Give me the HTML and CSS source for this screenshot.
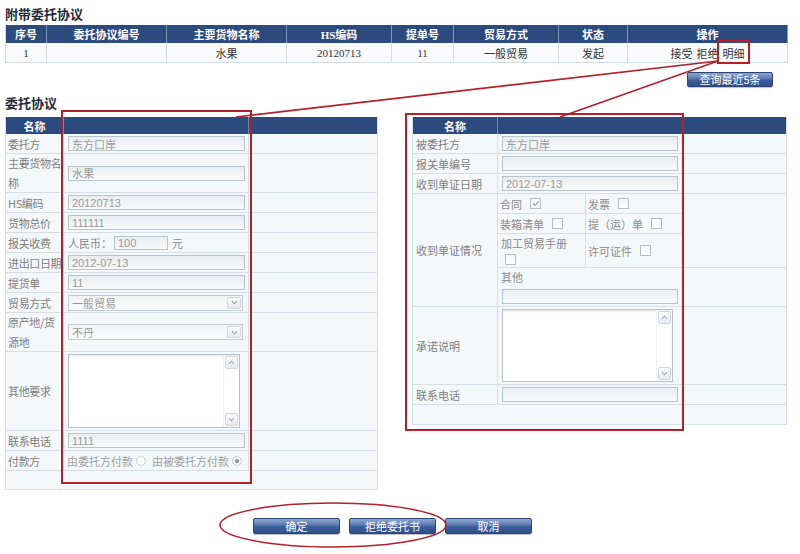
FILE: index.html
```html
<!DOCTYPE html>
<html lang="zh-CN">
<head>
<meta charset="utf-8">
<title>委托协议</title>
<link rel="stylesheet" href="styles.css">
</head>
<body>
<div class="page">
  <h2 class="sec-title t1">附带委托协议</h2>
  <div class="list">
    <div class="th">序号</div>
    <div class="th">委托协议编号</div>
    <div class="th">主要货物名称</div>
    <div class="th">HS编码</div>
    <div class="th">提单号</div>
    <div class="th">贸易方式</div>
    <div class="th">状态</div>
    <div class="th">操作</div>
    <div class="td">1</div>
    <div class="td"></div>
    <div class="td">水果</div>
    <div class="td">20120713</div>
    <div class="td">11</div>
    <div class="td">一般贸易</div>
    <div class="td">发起</div>
    <div class="td ops"><a>接受</a><a>拒绝</a><a>明细</a></div>
  </div>
  <div class="query-row"><button class="btn btn-query">查询最近5条</button></div>

  <h2 class="sec-title t2">委托协议</h2>
  <div class="panels">
    <div class="form form-left">
      <div class="h">名称</div><div class="h"></div><div class="h"></div>

      <div class="c lbl">委托方</div>
      <div class="c val"><input class="inp" value="东方口岸" readonly></div><div class="c f"></div>

      <div class="c lbl">主要货物名<br>称</div>
      <div class="c val"><input class="inp" value="水果" readonly></div><div class="c f"></div>

      <div class="c lbl">HS编码</div>
      <div class="c val"><input class="inp" value="20120713" readonly></div><div class="c f"></div>

      <div class="c lbl">货物总价</div>
      <div class="c val"><input class="inp" value="111111" readonly></div><div class="c f"></div>

      <div class="c lbl">报关收费</div>
      <div class="c val fee"><span>人民币：</span><input class="inp inp-s" value="100" readonly><span>元</span></div><div class="c f"></div>

      <div class="c lbl">进出口日期</div>
      <div class="c val"><input class="inp" value="2012-07-13" readonly></div><div class="c f"></div>

      <div class="c lbl">提货单</div>
      <div class="c val"><input class="inp" value="11" readonly></div><div class="c f"></div>

      <div class="c lbl">贸易方式</div>
      <div class="c val"><div class="sel"><span>一般贸易</span><span class="arr"><svg width="7" height="5" viewBox="0 0 8 5"><path d="M1 1 L4 4 L7 1" fill="none" stroke="#9aa3ab" stroke-width="1.2"/></svg></span></div></div><div class="c f"></div>

      <div class="c lbl">原产地/货<br>源地</div>
      <div class="c val"><div class="sel"><span>不丹</span><span class="arr"><svg width="7" height="5" viewBox="0 0 8 5"><path d="M1 1 L4 4 L7 1" fill="none" stroke="#9aa3ab" stroke-width="1.2"/></svg></span></div></div><div class="c f"></div>

      <div class="c lbl">其他要求</div>
      <div class="c val"><div class="ta ta-l"><div class="ta-body"></div><div class="sb"><span class="sbtn"><svg width="7" height="5" viewBox="0 0 8 5"><path d="M1 4 L4 1 L7 4" fill="none" stroke="#9aa3ab" stroke-width="1.2"/></svg></span><span class="sbtn"><svg width="7" height="5" viewBox="0 0 8 5"><path d="M1 1 L4 4 L7 1" fill="none" stroke="#9aa3ab" stroke-width="1.2"/></svg></span></div></div></div><div class="c f"></div>

      <div class="c lbl">联系电话</div>
      <div class="c val"><input class="inp" value="1111" readonly></div><div class="c f"></div>

      <div class="c lbl">付款方</div>
      <div class="c val pay"><span>由委托方付款</span><span class="rd"></span><span>由被委托方付款</span><span class="rd on"></span></div><div class="c f"></div>

      <div class="c span"></div>
    </div>

    <div class="form form-right">
      <div class="h">名称</div><div class="h"></div><div class="h"></div>

      <div class="c lbl">被委托方</div>
      <div class="c val"><input class="inp inp-r" value="东方口岸" readonly></div><div class="c f"></div>

      <div class="c lbl">报关单编号</div>
      <div class="c val"><input class="inp inp-r" value="" readonly></div><div class="c f"></div>

      <div class="c lbl">收到单证日期</div>
      <div class="c val"><input class="inp inp-r" value="2012-07-13" readonly></div><div class="c f"></div>

      <div class="c lbl rs2">收到单证情况</div>
      <div class="c val-checks">
        <div class="checks">
          <div class="ck">合同<span class="cb on"><svg width="8" height="7" viewBox="0 0 8 7"><path d="M1 3.5 L3 5.5 L7 1" fill="none" stroke="#8b949c" stroke-width="1.1"/></svg></span></div>
          <div class="ck">发票<span class="cb"></span></div>
          <div class="ck">装箱清单<span class="cb"></span></div>
          <div class="ck">提（运）单<span class="cb"></span></div>
          <div class="ck ck-col">加工贸易手册<span class="cb"></span></div>
          <div class="ck">许可证件<span class="cb"></span></div>
        </div>
      </div>
      <div class="c f"></div>

      <div class="c val other"><span class="other-t">其他</span><input class="inp inp-r" value="" readonly></div><div class="c f"></div>

      <div class="c lbl">承诺说明</div>
      <div class="c val"><div class="ta ta-r"><div class="ta-body"></div><div class="sb"><span class="sbtn"><svg width="7" height="5" viewBox="0 0 8 5"><path d="M1 4 L4 1 L7 4" fill="none" stroke="#9aa3ab" stroke-width="1.2"/></svg></span><span class="sbtn"><svg width="7" height="5" viewBox="0 0 8 5"><path d="M1 1 L4 4 L7 1" fill="none" stroke="#9aa3ab" stroke-width="1.2"/></svg></span></div></div></div><div class="c f"></div>

      <div class="c lbl">联系电话</div>
      <div class="c val"><input class="inp inp-r" value="" readonly></div><div class="c f"></div>

      <div class="c span"></div>
    </div>
  </div>

  <div class="actions">
    <button class="btn btn-act">确定</button>
    <button class="btn btn-act">拒绝委托书</button>
    <button class="btn btn-act">取消</button>
  </div>

  <svg class="marks" width="800" height="554" viewBox="0 0 800 554">
    <g fill="none" stroke="#b3202a">
      <rect x="718" y="41" width="31" height="22" stroke-width="2"/>
      <line x1="718" y1="61" x2="236" y2="117" stroke-width="1.6"/>
      <line x1="718" y1="61" x2="560" y2="117" stroke-width="1.6"/>
      <rect x="62" y="111" width="189" height="372" stroke-width="2"/>
      <rect x="406" y="114" width="277" height="316" stroke-width="2"/>
      <ellipse cx="333" cy="525" rx="113" ry="22" stroke-width="1.5"/>
    </g>
  </svg>
</div>
</body>
</html>
```
FILE: styles.css
```css
* { box-sizing: border-box; }
html, body { margin: 0; padding: 0; background: #fff; }
body {
  font-family: "Liberation Sans", "Noto Sans CJK SC", sans-serif;
  font-size: 11px;
  color: #333;
}
.page {
  position: relative;
  width: 800px;
  height: 554px;
  padding-left: 5px;
  overflow: hidden;
}
.sec-title {
  margin: 0;
  font-family: "Noto Sans CJK SC", sans-serif;
  font-size: 13px;
  font-weight: bold;
  line-height: 16px;
  color: #1f2a38;
}
.t1 { padding-top: 6px; height: 25px; }
.t2 { margin-top: 8px; height: 16px; margin-bottom: 6px; }

/* top list */
.list {
  display: grid;
  width: 783px;
  grid-template-columns: 41px 120px 120px 105px 62px 105px 69px 1fr;
  grid-template-rows: 18px 20px;
  border-left: 1px solid #d3dbe5;
  font-family: "Liberation Serif", "Noto Sans CJK SC", serif;
}
.list .th {
  background: #2d4a7f;
  color: #fff;
  font-weight: bold;
  display: flex;
  align-items: center;
  justify-content: center;
  border-right: 1px solid #8197b9;
}
.list .th:last-of-type { border-right: 1px solid #d3dbe5; }
.list .td {
  background: #f8fafc;
  border-right: 1px solid #d3dbe5;
  border-bottom: 1px solid #d3dbe5;
  display: flex;
  align-items: center;
  justify-content: center;
  color: #333;
}
.list .ops { gap: 4px; padding-left: 0; font-family: "Noto Sans CJK SC", sans-serif; }
.list .ops a { color: #333; }

.query-row {
  display: flex;
  justify-content: flex-end;
  width: 783px;
  height: 24px;
  padding: 9px 15px 0 0;
}

.btn {
  display: flex;
  align-items: center;
  justify-content: center;
  padding: 0;
  border: 1px solid #2a4575;
  border-radius: 2px;
  background: linear-gradient(to bottom, #8ea7d0 0%, #5d7db3 40%, #3d5f9b 55%, #2f4f86 100%);
  color: #fff;
  font-family: "Noto Sans CJK SC", sans-serif;
  font-size: 11px;
  line-height: 13px;
  box-shadow: 0 1px 1px rgba(0,0,0,.25);
}
.btn-query { width: 86px; height: 15px; }

/* forms */
.panels { display: flex; gap: 34px; align-items: flex-start; }
.form { display: grid; border-left: 1px solid #d6dee7; }
.form-left {
  width: 373px;
  grid-template-columns: 58px 185px 1fr;
  grid-template-rows: 17px 20px 39px 20px 20px 20px 20px 20px 20px 39px 79px 20px 20px 19px;
}
.form-right {
  width: 375px;
  grid-template-columns: 85px 186px 1fr;
  grid-template-rows: 17px 20px 20px 20px 74px 39px 78px 20px 20px;
}
.form .h {
  background: #2d4a7f;
  color: #fff;
  font-family: "Noto Sans CJK SC", sans-serif;
  font-weight: bold;
  display: flex;
  align-items: center;
  justify-content: center;
  border-right: 1px solid #7088b0;
}
.form .h:nth-child(3) { border-right: 1px solid #d6dee7; }
.form .c {
  background: #f5f8fb;
  border-right: 1px solid #d6dee7;
  border-bottom: 1px solid #d6dee7;
  display: flex;
  align-items: center;
  min-width: 0;
}
.form .lbl {
  padding-left: 2px;
  color: #7e7e7e;
  line-height: 20px;
  letter-spacing: -0.35px;
  white-space: nowrap;
  overflow: hidden;
  font-family: "Noto Sans CJK SC", sans-serif;
}
.form-right .lbl { padding-left: 3px; letter-spacing: 0; }
.form .val { padding-left: 4px; }
.form .span { grid-column: 1 / -1; }
.form .rs2 { grid-row: span 2; }

.inp {
  width: 177px;
  height: 15px;
  margin: 0;
  padding: 0 3px;
  border: 1px solid #b9c3cc;
  background: linear-gradient(to bottom, #e9edf0, #f8f9fa);
  color: #9a9a9a;
  font: 11px "Liberation Sans", "Noto Sans CJK SC", sans-serif;
  line-height: 13px;
  outline: none;
  flex-shrink: 0;
}
.inp-r { width: 176px; }
.inp-s { width: 54px; height: 14px; margin: 0 4px 0 2px; }
.fee { color: #8a8a8a; font-family: "Noto Sans CJK SC", sans-serif; white-space: nowrap; }

.sel {
  width: 175px;
  height: 16px;
  border: 1px solid #c3ccd4;
  background: linear-gradient(to bottom, #f0f2f4, #fbfcfc);
  display: flex;
  align-items: center;
  padding-left: 3px;
  color: #9a9a9a;
  font-family: "Noto Sans CJK SC", sans-serif;
}
.sel .arr {
  margin-left: auto;
  margin-right: 1px;
  width: 14px;
  height: 12px;
  border: 1px solid #d2d8dd;
  border-radius: 2px;
  background: linear-gradient(to bottom, #fbfcfc, #e5e9ed);
  display: flex;
  align-items: center;
  justify-content: center;
}

.ta {
  display: flex;
  border: 1px solid #b6c0c9;
  background: #fff;
  box-shadow: inset 0 2px 2px rgba(0,0,0,.07);
}
.ta-l { width: 172px; height: 74px; }
.ta-r { width: 171px; height: 73px; }
.ta-body { flex: 1; }
.sb {
  width: 16px;
  display: flex;
  flex-direction: column;
  justify-content: space-between;
  padding: 1px;
  border-left: 1px solid #eef1f3;
}
.sbtn {
  height: 13px;
  border: 1px solid #d0d6dc;
  border-radius: 2px;
  background: linear-gradient(to bottom, #fbfcfd, #e7ebee);
  display: flex;
  align-items: center;
  justify-content: center;
}

.pay {
  color: #a0a0a0;
  font-family: "Noto Sans CJK SC", sans-serif;
  padding-left: 3px !important;
  white-space: nowrap;
}
.pay span { flex-shrink: 0; }
.rd {
  display: inline-block;
  width: 10px;
  height: 10px;
  margin: 0 6px 0 3px;
  border: 1px solid #c6cdd3;
  border-radius: 50%;
  background: #fff;
  position: relative;
}
.rd.on::after {
  content: "";
  position: absolute;
  left: 2px; top: 2px;
  width: 4px; height: 4px;
  border-radius: 50%;
  background: #8c8c8c;
}

/* check area */
.val-checks { padding: 0; align-items: stretch !important; }
.checks {
  display: grid;
  width: 100%;
  grid-template-columns: 88px 1fr;
  grid-template-rows: 20px 20px 1fr;
}
.ck {
  display: flex;
  align-items: center;
  gap: 8px;
  padding-left: 2px;
  color: #8a8a8a;
  font-family: "Noto Sans CJK SC", sans-serif;
  border-bottom: 1px solid #d6dee7;
  white-space: nowrap;
}
.ck:nth-child(odd) { border-right: 1px solid #d6dee7; }
.ck:nth-child(5), .ck:nth-child(6) { border-bottom: none; }
.ck-col {
  flex-direction: column;
  align-items: flex-start;
  justify-content: center;
  gap: 3px;
  padding-left: 3px;
  line-height: 15px;
}
.ck-col .cb { margin-left: 4px; }
.cb {
  display: inline-flex;
  align-items: center;
  justify-content: center;
  width: 11px;
  height: 11px;
  border: 1px solid #b3bcc5;
  background: linear-gradient(to bottom, #f6f7f8, #fff);
}
.other {
  flex-direction: column;
  align-items: flex-start !important;
  justify-content: flex-start;
  padding: 1px 0 0 4px !important;
}
.other-t {
  color: #8a8a8a;
  font-family: "Noto Sans CJK SC", sans-serif;
  line-height: 17px;
  margin: 0 0 3px -1px;
}

.actions {
  display: flex;
  justify-content: center;
  gap: 9px;
  width: 775px;
  margin-top: 28px;
}
.btn-act { width: 87px; height: 16px; }

.marks {
  position: absolute;
  left: 0;
  top: 0;
  pointer-events: none;
}
```
